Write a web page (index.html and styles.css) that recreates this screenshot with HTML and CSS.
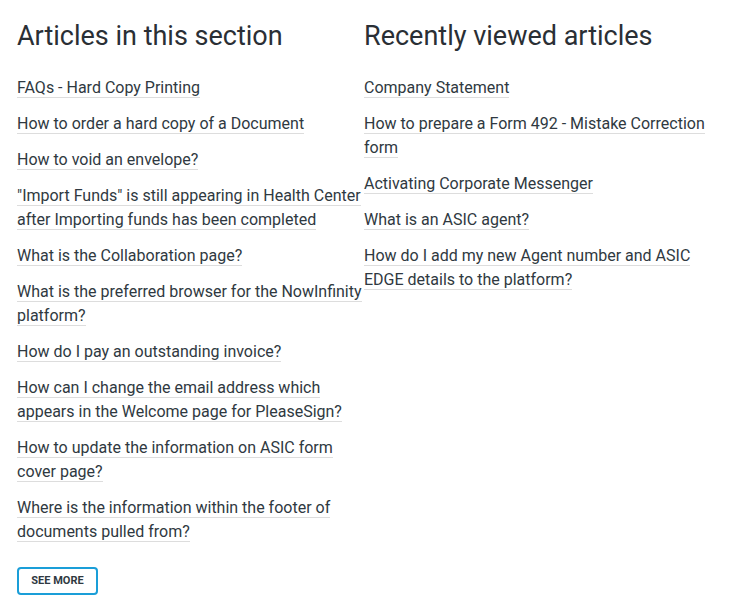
FILE: index.html
```html
<!DOCTYPE html>
<html lang="en">
<head>
<meta charset="utf-8">
<title>Articles</title>
<link rel="stylesheet" href="styles.css">
</head>
<body>
<div class="relatives">
  <section class="col">
    <h2 class="col-title">Articles in this section</h2>
    <ul class="list">
      <li class="item"><a class="link" href="#">FAQs - Hard Copy Printing</a></li>
      <li class="item"><a class="link" href="#">How to order a hard copy of a Document</a></li>
      <li class="item"><a class="link" href="#">How to void an envelope?</a></li>
      <li class="item"><a class="link" href="#">"Import Funds" is still appearing in Health Center after Importing funds has been completed</a></li>
      <li class="item"><a class="link" href="#">What is the Collaboration page?</a></li>
      <li class="item"><a class="link" href="#">What is the preferred browser for the NowInfinity platform?</a></li>
      <li class="item"><a class="link" href="#">How do I pay an outstanding invoice?</a></li>
      <li class="item"><a class="link" href="#">How can I change the email address which appears in the Welcome page for PleaseSign?</a></li>
      <li class="item"><a class="link" href="#">How to update the information on ASIC form cover page?</a></li>
      <li class="item"><a class="link" href="#">Where is the information within the footer of documents pulled from?</a></li>
    </ul>
    <a class="see-more" href="#">See more</a>
  </section>
  <section class="col">
    <h2 class="col-title">Recently viewed articles</h2>
    <ul class="list">
      <li class="item"><a class="link" href="#">Company Statement</a></li>
      <li class="item"><a class="link" href="#">How to prepare a Form 492 - Mistake Correction form</a></li>
      <li class="item"><a class="link" href="#">Activating Corporate Messenger</a></li>
      <li class="item"><a class="link" href="#">What is an ASIC agent?</a></li>
      <li class="item"><a class="link" href="#">How do I add my new Agent number and ASIC EDGE details to the platform?</a></li>
    </ul>
  </section>
</div>
</body>
</html>
```
FILE: styles.css
```css
html, body {
  margin: 0;
  padding: 0;
  background: #ffffff;
}
body {
  font-family: Roboto, "Liberation Sans", sans-serif;
  color: #2f3941;
}
.relatives {
  display: flex;
  padding: 17px 0 0 17px;
}
.col {
  width: 347px;
  flex: 0 0 347px;
}
.col-title {
  margin: 0 0 21px;
  font-size: 27px;
  font-weight: 400;
  line-height: 38px;
  color: #2a2f35;
}
.list {
  list-style: none;
  margin: 0;
  padding: 0;
}
.item {
  margin: 0 0 12px;
  font-size: 16px;
  line-height: 24px;
}
.link {
  color: #2f3941;
  text-decoration: none;
  border-bottom: 1px solid #dddddd;
}
.see-more {
  display: block;
  margin-top: 23px;
  box-sizing: border-box;
  width: 81px;
  height: 28px;
  border: 2px solid #1a9ed8;
  border-radius: 4px;
  font-size: 11px;
  font-weight: 700;
  line-height: 24px;
  text-align: center;
  text-transform: uppercase;
  text-decoration: none;
  color: #2f3941;
}
```
